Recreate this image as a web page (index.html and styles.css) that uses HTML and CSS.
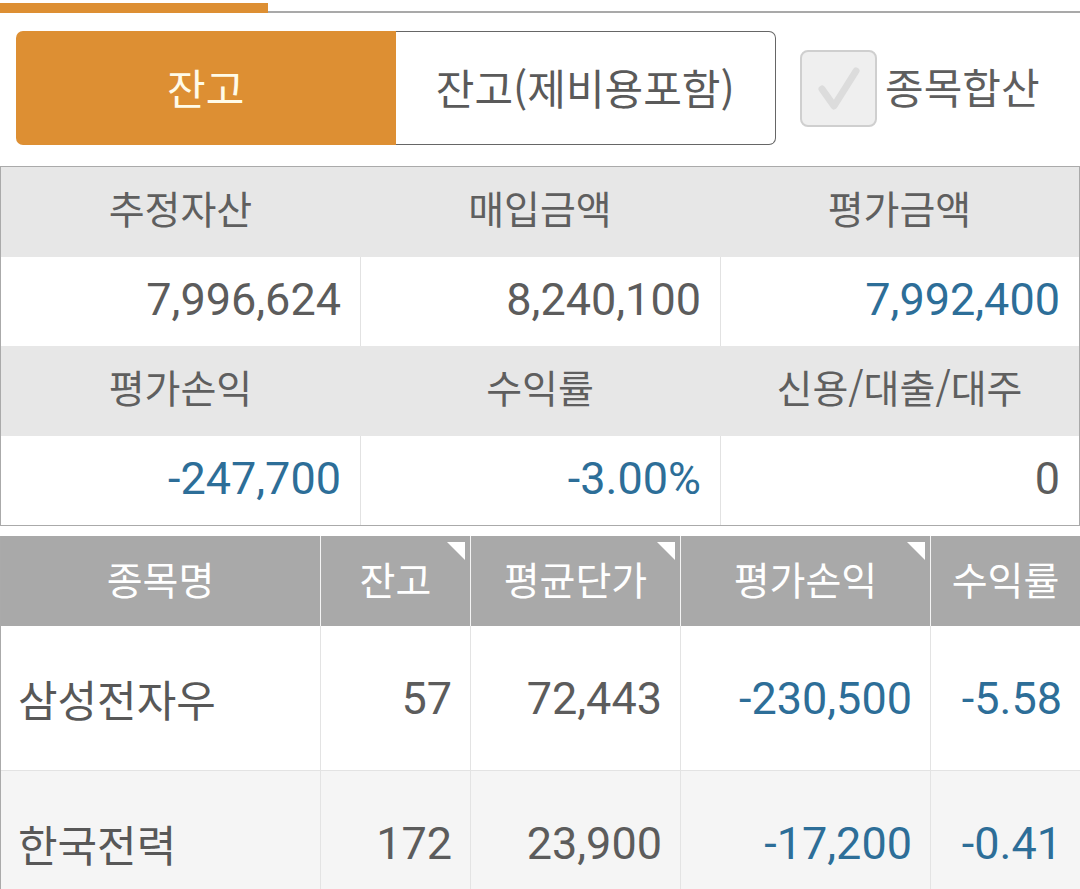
FILE: index.html
```html
<!DOCTYPE html>
<html lang="ko">
<head>
<meta charset="utf-8">
<title>잔고</title>
<link rel="stylesheet" href="styles.css">
</head>
<body>
<div class="tabline">
  <div class="tab-active"></div>
  <div class="tab-rest"></div>
</div>

<div class="toolbar">
  <div class="segment">
    <div class="seg seg-on">잔고</div>
    <div class="seg seg-off">잔고(제비용포함)</div>
  </div>
  <div class="check">
    <svg class="checkbox" width="77" height="77" viewBox="0 0 77 77">
      <rect x="1" y="1" width="75" height="75" rx="7" ry="7" fill="#efefef" stroke="#cfcfcf" stroke-width="2"/>
      <path d="M22 39 L34 56 L56 21" fill="none" stroke="#dcdcdc" stroke-width="7" stroke-linecap="round" stroke-linejoin="round"/>
    </svg>
    <span class="check-label">종목합산</span>
  </div>
</div>

<div class="summary">
  <div class="s-head">추정자산</div>
  <div class="s-head">매입금액</div>
  <div class="s-head">평가금액</div>
  <div class="s-val">7,996,624</div>
  <div class="s-val sep">8,240,100</div>
  <div class="s-val sep blue">7,992,400</div>
  <div class="s-head">평가손익</div>
  <div class="s-head">수익률</div>
  <div class="s-head">신용/대출/대주</div>
  <div class="s-val blue">-247,700</div>
  <div class="s-val sep blue">-3.00%</div>
  <div class="s-val sep">0</div>
</div>

<div class="holdings">
  <div class="h-head">종목명</div>
  <div class="h-head sort">잔고</div>
  <div class="h-head sort">평균단가</div>
  <div class="h-head sort">평가손익</div>
  <div class="h-head">수익률</div>

  <div class="cell name">삼성전자우</div>
  <div class="cell num">57</div>
  <div class="cell num">72,443</div>
  <div class="cell num blue">-230,500</div>
  <div class="cell num blue">-5.58</div>

  <div class="cell name alt">한국전력</div>
  <div class="cell num alt">172</div>
  <div class="cell num alt">23,900</div>
  <div class="cell num alt blue">-17,200</div>
  <div class="cell num alt blue">-0.41</div>
</div>
</body>
</html>
```

FILE: styles.css
```css
* {
  box-sizing: border-box;
}

html, body {
  margin: 0;
  padding: 0;
  background: #ffffff;
  overflow: hidden;
}

body {
  width: 1080px;
  height: 889px;
  font-family: Roboto, "Noto Sans CJK KR", sans-serif;
  color: #5e5e5e;
}

.tabline {
  display: flex;
  align-items: flex-end;
  height: 13px;
}

.tab-active {
  width: 268px;
  height: 10px;
  background: #dd8f33;
}

.tab-rest {
  flex: 1;
  height: 2px;
  background: #a9a9a9;
}

.toolbar {
  display: flex;
  align-items: center;
  margin-top: 18px;
  padding-left: 16px;
  height: 114px;
}

.segment {
  display: flex;
  width: 760px;
  height: 114px;
}

.seg {
  flex: 1;
  display: flex;
  align-items: center;
  justify-content: center;
  padding-bottom: 4px;
  font-size: 42px;
  font-family: "Noto Sans CJK KR", sans-serif;
}

.seg-on {
  background: #dd8f33;
  color: #fffbe8;
  border-radius: 7px 0 0 7px;
}

.seg-off {
  background: #ffffff;
  color: #5a5a5a;
  border: 1px solid #666666;
  border-left: none;
  border-radius: 0 7px 7px 0;
}

.check {
  display: flex;
  align-items: center;
  margin-left: 24px;
}

.checkbox {
  display: block;
}

.check-label {
  margin-left: 8px;
  padding-bottom: 6px;
  font-size: 42px;
  font-family: "Noto Sans CJK KR", sans-serif;
  color: #5e5e5e;
}

.summary {
  display: grid;
  grid-template-columns: 359px 360px 1fr;
  grid-template-rows: repeat(4, 1fr);
  margin-top: 21px;
  height: 360px;
  border: 1px solid #aaaaaa;
}

.s-head {
  background: #e7e7e7;
  display: flex;
  align-items: center;
  justify-content: center;
  padding-bottom: 9px;
  font-family: "Noto Sans CJK KR", sans-serif;
  font-size: 39px;
  color: #5f5f5f;
}

.s-val {
  background: #ffffff;
  display: flex;
  align-items: center;
  justify-content: flex-end;
  padding-right: 19px;
  padding-bottom: 3px;
  font-size: 45px;
  color: #5c5c5c;
}

.s-val.sep {
  border-left: 1px solid #e2e2e2;
}

.blue {
  color: #2d6e98 !important;
}

.holdings {
  display: grid;
  grid-template-columns: 319px 150px 210px 250px 1fr;
  grid-template-rows: 90px 145px 145px;
  margin-top: 10px;
  border-left: 1px solid #aaaaaa;
}

.h-head {
  position: relative;
  background: #a9a9a9;
  color: #ffffff;
  display: flex;
  align-items: center;
  justify-content: center;
  padding-bottom: 7px;
  font-family: "Noto Sans CJK KR", sans-serif;
  font-size: 39px;
  border-left: 1px solid #f4f4f4;
}

.h-head:first-child {
  border-left: none;
}

.h-head.sort::after {
  content: "";
  position: absolute;
  top: 6px;
  right: 5px;
  width: 0;
  height: 0;
  border-top: 18px solid #ffffff;
  border-left: 18px solid transparent;
}

.cell {
  display: flex;
  align-items: center;
  border-left: 1px solid #e3e3e3;
  border-bottom: 1px solid #e3e3e3;
  background: #ffffff;
}

.cell.alt {
  background: #f5f5f5;
}

.cell.name {
  border-left: none;
  padding-left: 17px;
  font-family: "Noto Sans CJK KR", sans-serif;
  font-size: 43px;
  color: #585858;
}

.cell.num {
  justify-content: flex-end;
  padding-right: 18px;
  font-size: 45px;
  color: #5c5c5c;
}
```
